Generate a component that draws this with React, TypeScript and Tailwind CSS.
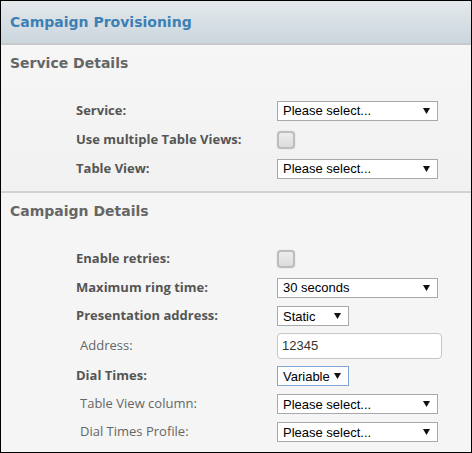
import React from "react";

function Arrow() {
  return (
    <svg width="7" height="6" viewBox="0 0 7 6" className="shrink-0">
      <polygon points="0,0 7,0 3.5,6" fill="#111" />
    </svg>
  );
}

function Select({ text, w = "w-[161px]", focused = false }: { text: string; w?: string; focused?: boolean }) {
  return (
    <div
      className={`${w} h-[20px] bg-white flex items-center justify-between pl-[5px] pr-[7px] text-[13px] text-black leading-none border ${
        focused ? "border-[#7fa6d6]" : "border-[#a9a9a9]"
      }`}
      style={{ fontFamily: '"Liberation Sans", Arial, sans-serif' }}
    >
      <span>{text}</span>
      <Arrow />
    </div>
  );
}

function Checkbox() {
  return (
    <div className="w-[18px] h-[18px] rounded-[4px] border-2 border-[#bdbdbd] bg-gradient-to-b from-[#ededed] to-[#dcdcdc] shadow-[0_0_1px_#aaa]" />
  );
}

function Row({
  label,
  bold = true,
  h = "h-[29px]",
  children,
}: {
  label: string;
  bold?: boolean;
  h?: string;
  children: React.ReactNode;
}) {
  return (
    <div className={`flex items-center ${h}`}>
      <div
        className={`w-[276px] shrink-0 text-[13px] ${
          bold ? "pl-[75px] font-bold text-[#555]" : "pl-[79px] text-[#666]"
        }`}
        style={{ fontFamily: '"Open Sans", "Noto Sans", sans-serif' }}
      >
        {label}
      </div>
      {children}
    </div>
  );
}

export default function App() {
  const headFont = { fontFamily: '"DejaVu Sans", Verdana, sans-serif' };
  return (
    <div className="w-[472px] h-[453px] border border-black bg-[#f4f5f4] flex flex-col overflow-hidden">
      <div className="h-[44px] shrink-0 bg-gradient-to-b from-[#e4e9eb] to-[#cbd6dd] border-b-2 border-[#c9c9c9] flex items-center pl-[9px]">
        <span className="text-[14px] font-bold text-[#3c80b6]" style={headFont}>
          Campaign Provisioning
        </span>
      </div>
      <div className="pt-[8px] pb-[8px] border-b-2 border-[#d2d2d2] bg-gradient-to-b from-[#f5f6f5] to-[#f0f1f0]">
        <div className="h-[20px] pl-[9px] flex items-center text-[14px] font-bold text-[#666]" style={headFont}>
          Service Details
        </div>
        <div className="mt-[23px]">
          <Row label="Service:">
            <Select text="Please select..." />
          </Row>
          <Row label="Use multiple Table Views:">
            <Checkbox />
          </Row>
          <Row label="Table View:">
            <Select text="Please select..." />
          </Row>
        </div>
      </div>
      <div className="pt-[8px]">
        <div className="h-[20px] pl-[9px] flex items-center text-[14px] font-bold text-[#666]" style={headFont}>
          Campaign Details
        </div>
        <div className="mt-[23px]">
          <Row label="Enable retries:">
            <Checkbox />
          </Row>
          <Row label="Maximum ring time:">
            <Select text="30 seconds" />
          </Row>
          <Row label="Presentation address:" h="h-[28px]">
            <Select text="Static" w="w-[72px]" />
          </Row>
          <Row label="Address:" bold={false} h="h-[32px]">
            <div
              className="w-[165px] h-[26px] bg-white border border-[#c6c6c6] rounded-[4px] flex items-center pl-[4px] text-[13px] text-[#333]"
              style={{ fontFamily: '"Liberation Sans", Arial, sans-serif' }}
            >
              12345
            </div>
          </Row>
          <Row label="Dial Times:" h="h-[28px]">
            <Select text="Variable" w="w-[72px]" focused />
          </Row>
          <Row label="Table View column:" bold={false} h="h-[28px]">
            <Select text="Please select..." />
          </Row>
          <Row label="Dial Times Profile:" bold={false} h="h-[28px]">
            <Select text="Please select..." />
          </Row>
        </div>
      </div>
    </div>
  );
}
